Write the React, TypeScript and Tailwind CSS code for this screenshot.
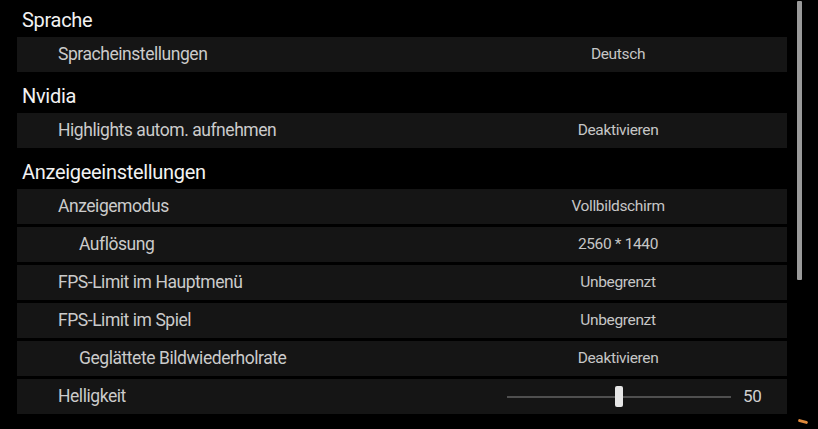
import React from 'react';

type Row = { label: string; value?: string; level: 1 | 2; slider?: number };

const groups: { title: string; rows: Row[] }[] = [
  { title: 'Sprache', rows: [{ label: 'Spracheinstellungen', value: 'Deutsch', level: 1 }] },
  { title: 'Nvidia', rows: [{ label: 'Highlights autom. aufnehmen', value: 'Deaktivieren', level: 1 }] },
  {
    title: 'Anzeigeeinstellungen',
    rows: [
      { label: 'Anzeigemodus', value: 'Vollbildschirm', level: 1 },
      { label: 'Auflösung', value: '2560 * 1440', level: 2 },
      { label: 'FPS-Limit im Hauptmenü', value: 'Unbegrenzt', level: 1 },
      { label: 'FPS-Limit im Spiel', value: 'Unbegrenzt', level: 1 },
      { label: 'Geglättete Bildwiederholrate', value: 'Deaktivieren', level: 2 },
      { label: 'Helligkeit', level: 1, slider: 50 },
    ],
  },
];

function Slider({ value }: { value: number }) {
  return (
    <div className="flex items-center pl-[58px]">
      <div className="relative h-[2px] w-[224px] bg-[#4f4f4f]">
        <div
          className="absolute top-[-10px] h-[21px] w-[8px] -translate-x-1/2 rounded-[2px] bg-[#e6e6e6]"
          style={{ left: `${value}%` }}
        />
      </div>
      <span className="ml-[12px] text-[17px] text-[#d0d0d0]">{value}</span>
    </div>
  );
}

export default function App() {
  return (
    <div
      className="relative flex h-[429px] w-[818px] overflow-hidden bg-black"
      style={{ fontFamily: 'Roboto, "Liberation Sans", sans-serif' }}
    >
      <div className="-mt-px w-[787px] pl-[17px]">
        {groups.map((g) => (
          <div key={g.title}>
            <div className="flex h-[38px] items-end pb-[5px] pl-[5px] text-[20px] leading-[24px] tracking-[-0.3px] text-[#f2f2f2]">
              {g.title}
            </div>
            {g.rows.map((r) => (
              <div key={r.label} className="mb-[3px] flex h-[35px] items-center bg-[#151515]">
                <div
                  className={`flex-1 text-[17.5px] tracking-[-0.45px] text-[#cbcbcb] ${
                    r.level === 2 ? 'pl-[62px]' : 'pl-[41px]'
                  }`}
                >
                  {r.label}
                </div>
                <div className="w-[338px] text-[15.5px] tracking-[-0.35px] text-[#c6c6c6]">
                  {r.slider !== undefined ? (
                    <Slider value={r.slider} />
                  ) : (
                    <div className="text-center">{r.value}</div>
                  )}
                </div>
              </div>
            ))}
          </div>
        ))}
      </div>
      <div className="ml-[10px] mt-px h-[279px] w-[5px] rounded-[1px] bg-[#9a9a9a]" />
      <div className="absolute left-[798px] top-[420px] h-[3px] w-[10px] rotate-[15deg] rounded-full bg-[#e08a3c]" />
    </div>
  );
}
